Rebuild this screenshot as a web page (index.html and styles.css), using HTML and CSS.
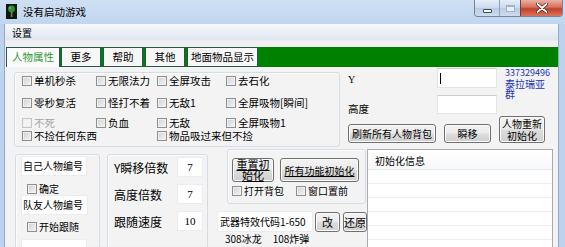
FILE: index.html
```html
<!DOCTYPE html>
<html lang="zh-CN">
<head>
  <meta charset="UTF-8">
  <title>没有启动游戏</title>
  <link rel="stylesheet" href="styles.css">
</head>
<body>
<div class="window">
  <div class="titlebar">
    <svg class="app-icon" viewBox="0 0 11 15" width="11" height="15">
      <rect width="11" height="15" fill="#0c1a0e"/>
      <circle cx="5.5" cy="5" r="3.4" fill="#2f8f3c"/>
      <circle cx="4" cy="4" r="1.3" fill="#4fb35a"/>
      <rect x="4.8" y="8" width="1.6" height="5" fill="#7d7a62"/>
    </svg>
    <span class="title">没有启动游戏</span>
    <div class="caption">
      <span class="cap cap-min"><i></i></span>
      <span class="cap cap-max"><i></i></span>
      <span class="cap cap-close">
        <svg viewBox="0 0 12 10" width="12" height="10">
          <path d="M1.5 1 L10.5 9 M10.5 1 L1.5 9" stroke="#4a1a14" stroke-width="3.2" stroke-linecap="round"/>
          <path d="M1.5 1 L10.5 9 M10.5 1 L1.5 9" stroke="#ffffff" stroke-width="1.8" stroke-linecap="round"/>
        </svg>
      </span>
    </div>
  </div>

  <div class="client">
    <div class="menubar"><span class="menu-item">设置</span></div>

    <div class="tabstrip">
      <span class="tab tab-active tab-attr">人物属性</span>
      <span class="tab tab-short">更多</span>
      <span class="tab tab-short">帮助</span>
      <span class="tab tab-short">其他</span>
      <span class="tab tab-ground">地面物品显示</span>
    </div>

    <div class="panel">
      <div class="panel-top">
        <div class="group cheats">
          <label class="cb"><span class="box"></span>单机秒杀</label>
          <label class="cb"><span class="box"></span>无限法力</label>
          <label class="cb"><span class="box"></span>全屏攻击</label>
          <label class="cb"><span class="box"></span>去石化</label>

          <label class="cb"><span class="box"></span>零秒复活</label>
          <label class="cb"><span class="box"></span>怪打不着</label>
          <label class="cb"><span class="box"></span>无敌1</label>
          <label class="cb"><span class="box"></span>全屏吸物[瞬间]</label>

          <label class="cb cb-disabled"><span class="box"></span>不死</label>
          <label class="cb"><span class="box"></span>负血</label>
          <label class="cb"><span class="box"></span>无敌</label>
          <label class="cb"><span class="box"></span>全屏吸物1</label>

          <label class="cb cb-wide"><span class="box"></span>不捡任何东西</label>
          <label class="cb cb-wide"><span class="box"></span>物品吸过来但不捡</label>
        </div>

        <div class="coords">
          <div class="coord-grid">
            <span class="coord-label">Y</span>
            <span class="field coord-field"><span class="caret"></span></span>
            <div class="group-link">
              <div class="qq">337329496</div>
              <div>泰拉瑞亚</div>
              <div>群</div>
            </div>
            <span class="coord-label coord-label-2">高度</span>
            <span class="field coord-field coord-field-2"></span>
          </div>
          <div class="coord-buttons">
            <span class="btn btn-refresh">刷新所有人物背包</span>
            <span class="btn btn-tp">瞬移</span>
            <span class="btn btn-reinit">人物重新<br>初始化</span>
          </div>
        </div>
      </div>

      <div class="panel-bottom">
        <div class="group follow">
          <span class="field follow-field">自己人物编号</span>
          <label class="cb follow-cb follow-cb-1"><span class="box"></span>确定</label>
          <span class="field follow-field follow-field-2">队友人物编号</span>
          <label class="cb follow-cb"><span class="box"></span>开始跟随</label>
          <span class="field follow-field follow-field-3"></span>
        </div>

        <div class="group speeds">
          <span class="speed-label">Y瞬移倍数</span><span class="field num">7</span>
          <span class="speed-label">高度倍数</span><span class="field num">7</span>
          <span class="speed-label">跟随速度</span><span class="field num">10</span>
        </div>

        <div class="tools">
          <div class="group inits">
            <div class="init-buttons">
              <span class="btn btn-reset"><u>重置初<br>始化</u></span>
              <span class="btn btn-allinit"><u>所有功能初始化</u></span>
            </div>
            <div class="init-checks">
              <label class="cb cb-bag"><span class="box"></span>打开背包</label>
              <label class="cb"><span class="box"></span>窗口置前</label>
            </div>
          </div>
          <div class="weapon">
            <span class="field weapon-field">武器特效代码1-650</span>
            <span class="btn btn-small">改</span>
            <span class="btn btn-small btn-restore">还原</span>
          </div>
          <div class="codes"><span>308冰龙</span><span>108炸弹</span></div>
        </div>

        <div class="listview">
          <div class="list-head">初始化信息</div>
          <div class="list-body"></div>
        </div>
      </div>
    </div>
  </div>
</div>
</body>
</html>
```

FILE: styles.css
```css
* {
  box-sizing: border-box;
}
body {
  margin: 0;
  width: 565px;
  height: 247px;
  overflow: hidden;
  background: #bcd2ed;
  font-family: "Noto Sans CJK SC", "Liberation Sans", sans-serif;
  font-size: 10px;
  color: #000;
}

/* title bar */
.titlebar {
  height: 24px;
  display: flex;
  align-items: flex-start;
  background: linear-gradient(#cfdff3, #c1d6ef);
}
.app-icon {
  margin: 4px 0 0 6px;
}
.title {
  margin: 5px 0 0 6px;
  font-size: 10.5px;
  line-height: 14px;
}
.caption {
  margin-left: auto;
  margin-right: 2px;
  display: flex;
  height: 17px;
  border: 1px solid #6f84a3;
  border-top: none;
  border-radius: 0 0 4px 4px;
  overflow: hidden;
}
.cap {
  display: flex;
  align-items: center;
  justify-content: center;
  background: linear-gradient(#e6eef8, #cad9ec 50%, #b9cce4 51%, #cddcee);
}
.cap-min {
  width: 24px;
}
.cap-min i {
  width: 9px;
  height: 4px;
  margin-top: 5px;
  border: 1px solid #3c4a60;
  background: #fff;
  border-radius: 1px;
}
.cap-max {
  width: 21px;
  border-left: 1px solid #8ea0ba;
}
.cap-max i {
  width: 9px;
  height: 7px;
  border: 1px solid #a3b1c4;
  border-top-width: 2px;
  background: #e9eff7;
}
.cap-close {
  width: 42px;
  border-left: 1px solid #7d3c33;
  background: linear-gradient(#eab1a5, #d66f5c 45%, #c2402a 55%, #d9755b);
}

/* client area */
.client {
  margin-left: 4px;
  width: 555px;
  height: 223px;
  background: #f0f0f0;
  border-left: 1px solid #94a9c5;
  border-right: 1px solid #94a9c5;
  overflow: hidden;
}
.menubar {
  height: 17px;
  padding-left: 7px;
  line-height: 17px;
  background: linear-gradient(#f6f8fb, #dfe6f0);
  border-bottom: 1px solid #e9edf3;
}
.tabstrip {
  margin: 6px 0 0 1px;
  width: 552px;
  height: 20px;
  display: flex;
  background: #008000;
}
.tab {
  height: 20px;
  margin-right: 2px;
  border: 1px solid #24564c;
  background: #f7f7f7;
  text-align: center;
  font-size: 10.5px;
  line-height: 18px;
}
.tab-active {
  margin-right: 1px;
  color: #2f9a35;
  background: #fbfbfb;
  border-bottom: none;
}
.tab-attr {
  width: 54px;
}
.tab-short {
  width: 40px;
}
.tab-ground {
  width: 71px;
}

.panel {
  height: 179px;
  background: #f3f3f3;
}
.panel-top {
  display: flex;
  height: 80px;
}

.group {
  border: 1px solid #d5dce3;
  border-radius: 3px;
  box-shadow: inset 1px 1px 0 #fcfcfc;
}

/* checkboxes */
.cb {
  display: flex;
  align-items: center;
  gap: 2px;
  height: 12px;
  line-height: 12px;
  white-space: nowrap;
}
.box {
  flex: none;
  width: 10px;
  height: 10px;
  border: 1px solid #8e8f8f;
  background: linear-gradient(135deg, #cdd0d4, #f6f6f6);
  box-shadow: inset 0 0 0 1px #f0f0f0;
}
.cb-disabled {
  color: #a3a3a3;
}
.cb-disabled .box {
  border-color: #c5c5c5;
  background: #f3f3f3;
}

.cheats {
  margin: 5px 0 0 9px;
  width: 326px;
  height: 75px;
  padding-left: 7px;
  display: grid;
  grid-template-columns: 74px 61px 69px 1fr;
  grid-template-rows: 16px 28px 12px 14px;
  align-items: center;
  font-size: 10.5px;
}
.cb-wide {
  grid-column: span 2;
}

/* coordinates */
.coords {
  width: 218px;
}
.coord-grid {
  padding-top: 1px;
  display: grid;
  grid-template-columns: 97px 60px 1fr;
  grid-template-rows: 20px 20px;
  row-gap: 7px;
}
.coord-label {
  padding: 2px 0 0 8px;
  align-self: center;
  font-family: "Liberation Serif", "Noto Sans CJK SC", serif;
}
.coord-label-2 {
  grid-row: 2;
  padding-top: 6px;
  font-family: "Noto Sans CJK SC", sans-serif;
  font-size: 10.5px;
}
.field {
  display: block;
  background: #fff;
  border: 1px solid #e1e3e8;
  border-top-color: #c9ccd3;
}
.coord-field {
  height: 20px;
  padding: 4px 0 0 2px;
}
.coord-field-2 {
  grid-row: 2;
  grid-column: 2;
  height: 19px;
}
.caret {
  display: block;
  width: 1px;
  height: 11px;
  background: #000;
}
.group-link {
  grid-row: 1 / span 2;
  grid-column: 3;
  padding-left: 8px;
  color: #2233b8;
  font-size: 10px;
  line-height: 10.5px;
}
.qq {
  font-size: 9px;
}
.coord-buttons {
  display: flex;
  align-items: flex-end;
  gap: 8px;
  height: 28px;
  padding-left: 8px;
}

/* buttons */
.btn {
  display: flex;
  align-items: center;
  justify-content: center;
  text-align: center;
  border: 1px solid #707070;
  border-radius: 3px;
  background: linear-gradient(#f3f3f3, #ebebeb 48%, #dddddd 52%, #cfcfcf);
  box-shadow: inset 0 0 0 1px #fbfbfb;
  white-space: nowrap;
}
.btn-refresh {
  width: 88px;
  height: 19px;
}
.btn-tp {
  width: 47px;
  height: 19px;
}
.btn-reinit {
  width: 46px;
  height: 27px;
  line-height: 12px;
}

/* bottom half */
.panel-bottom {
  display: flex;
  align-items: flex-start;
  padding-left: 10px;
}
.follow {
  margin-top: 7px;
  width: 85px;
  height: 100px;
  display: flex;
  flex-direction: column;
  align-items: flex-start;
}
.follow-field {
  margin: 1px 0 0 5px;
  width: 66px;
  height: 20px;
  padding-left: 1px;
  border-color: #ececec;
  line-height: 18px;
}
.follow-field-2 {
  margin-top: 0;
  width: 67px;
}
.follow-field-3 {
  margin-top: 6px;
}
.follow-cb {
  margin: 6px 0 0 11px;
  height: 14px;
}
.follow-cb-1 {
  margin-top: 7px;
}

.speeds {
  margin: 7px 0 0 7px;
  width: 101px;
  height: 100px;
  padding-top: 2px;
  display: grid;
  grid-template-columns: 69px 26px;
  grid-template-rows: 20px 20px 20px;
  row-gap: 7px;
  align-items: center;
}
.speed-label {
  padding-left: 6px;
  font-size: 12px;
  white-space: nowrap;
}
.num {
  height: 20px;
  line-height: 18px;
  text-align: center;
  border-color: #ececec;
  font-family: "Liberation Serif", serif;
  font-size: 11px;
}

.tools {
  margin: 2px 0 0 9px;
  width: 150px;
}
.inits {
  margin-left: 10px;
  width: 139px;
  height: 55px;
  padding: 8px 0 0 4px;
}
.init-buttons {
  display: flex;
  gap: 6px;
}
.btn-reset {
  width: 42px;
  height: 24px;
  font-size: 11px;
  line-height: 11px;
}
.btn-allinit {
  width: 79px;
  height: 24px;
}
.init-checks {
  display: flex;
  margin-top: 3px;
}
.cb-bag {
  width: 64px;
}
.weapon {
  display: flex;
  align-items: center;
  margin-top: 7px;
}
.weapon-field {
  width: 96px;
  height: 21px;
  padding-left: 2px;
  line-height: 19px;
  border-color: #ececec;
}
.btn-small {
  margin-left: 2px;
  width: 25px;
  height: 20px;
  font-size: 11px;
}
.btn-restore {
  margin-left: 3px;
  width: 24px;
}
.codes {
  display: flex;
  gap: 11px;
  margin-top: 1px;
  padding-left: 8px;
  line-height: 12px;
}

.listview {
  margin-top: 2px;
  width: 186px;
  height: 100px;
  background: #fff;
  border: 1px solid #a8abb2;
}
.list-head {
  height: 20px;
  padding: 2px 0 0 7px;
  line-height: 18px;
  border-bottom: 1px solid #e8e8e8;
  background: linear-gradient(#ffffff, #f7f8fa);
}
.list-body {
  height: 80px;
  background: repeating-linear-gradient(#fff 0 13px, #eeeeee 13px 14px);
}
```
